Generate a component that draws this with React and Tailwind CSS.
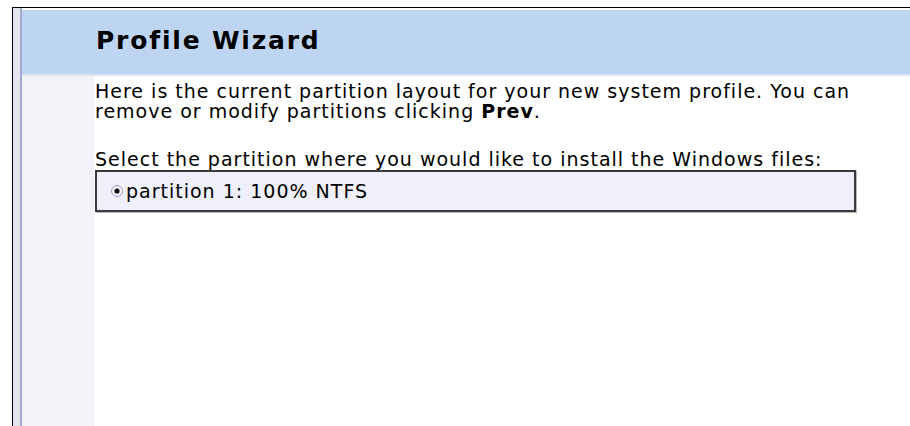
export default function App() {
  return (
    <div className="h-[426px] w-[910px] overflow-hidden bg-white pl-[12px] pt-[7px] font-['DejaVu_Sans','Verdana',sans-serif] text-black">
      <div className="flex h-full border-l border-t border-black">
        {/* frame gutter */}
        <div className="w-[7px] bg-[#e6e6ef]" />
        <div className="w-[2px] bg-[#a7a7d0]" />

        <div className="flex flex-1 flex-col pt-[2px]">
          <header className="h-[66px] border-b-2 border-[#dfe2f2] bg-[#bed5f2] pl-[74px] pt-[18px]">
            <h1 className="text-[25px] font-bold leading-[25px] tracking-[1.8px]">Profile Wizard</h1>
          </header>

          <div className="flex flex-1">
            <aside className="w-[72px] bg-[#f2f3f8]" />
            <main className="flex-1 pl-[1px] pt-[5px] text-[19px] leading-[20px] tracking-[1px]">
              <p>
                Here is the current partition layout for your new system profile. You can
                <br />
                remove or modify partitions clicking <b>Prev</b>.
              </p>
              <p className="mt-[28px]">Select the partition where you would like to install the Windows files:</p>
              <WizardOption label="partition 1: 100% NTFS" />
            </main>
          </div>
        </div>
      </div>
    </div>
  );
}

function WizardOption({ label }) {
  return (
    <div className="mt-[1px] flex h-[42px] w-[761px] items-center border-2 border-[#3b3b3b] bg-[#f0f0fd] pl-[14px] shadow-[1px_1px_0_#b8b8b8]">
      <svg width="12" height="12" viewBox="0 0 12 12" className="mr-[3px] shrink-0">
        <circle cx="6" cy="6" r="5.5" fill="#f4f4fb" stroke="#9d9dc6" />
        <circle cx="6" cy="6" r="2.6" fill="#111" />
      </svg>
      <span>{label}</span>
    </div>
  );
}
